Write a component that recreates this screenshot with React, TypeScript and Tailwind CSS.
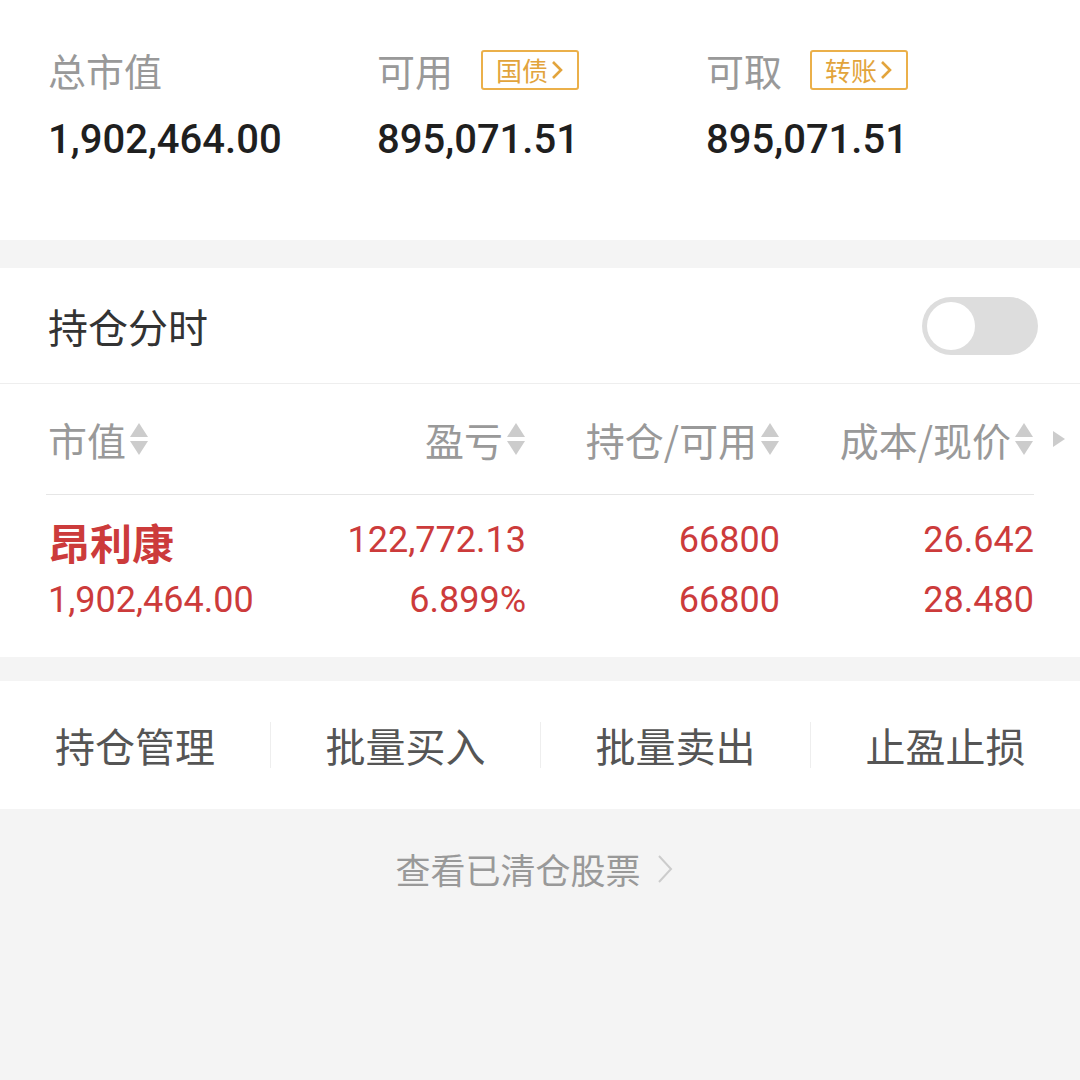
const cjk = "font-['Noto_Sans_CJK_SC','Noto_Sans',sans-serif]"
const num = "font-['Roboto','Noto_Sans_CJK_SC',sans-serif]"

function SortArrows() {
    return (
        <svg width="20" height="34" viewBox="0 0 20 34" className="ml-[3px] shrink-0">
            <path d="M10 1 L19 15 L1 15 Z" fill="#cccccc" />
            <path d="M1 19 L19 19 L10 33 Z" fill="#cccccc" />
        </svg>
    )
}

function Badge({ text }: { text: string }) {
    return (
        <div className="ml-[28px] flex h-[40px] w-[98px] items-center justify-center gap-[2px] rounded-[3px] border-2 border-[#ebb04a]">
            <span className={`${cjk} text-[26px] leading-none text-[#e2a43c]`}>{text}</span>
            <svg width="14" height="22" viewBox="0 0 14 22">
                <path d="M3 3 L11 11 L3 19" fill="none" stroke="#e2a43c" strokeWidth="2.6" strokeLinejoin="miter" />
            </svg>
        </div>
    )
}

const summary = [
    { label: "总市值", value: "1,902,464.00" },
    { label: "可用", value: "895,071.51", badge: "国债" },
    { label: "可取", value: "895,071.51", badge: "转账" },
]

const headers = ["市值", "盈亏", "持仓/可用", "成本/现价"]
const actions = ["持仓管理", "批量买入", "批量卖出", "止盈止损"]

export default function App() {
    return (
        <div className="flex min-h-[1080px] w-[1080px] flex-col bg-[#f4f4f4]">
            {/* account summary */}
            <section className="grid h-[240px] grid-cols-[329px_329px_1fr] bg-white pl-[48px] pt-[50px]">
                {summary.map(item => (
                    <div key={item.label} className="flex flex-col">
                        <div className="flex h-[40px] items-center">
                            <span className={`${cjk} text-[38px] leading-none text-[#999999]`}>{item.label}</span>
                            {item.badge && <Badge text={item.badge} />}
                        </div>
                        <div className={`${num} mt-[26px] h-[48px] text-[40px] font-medium leading-[48px] text-[#1f1f1f]`}>{item.value}</div>
                    </div>
                ))}
            </section>

            <div className="h-[28px]" />

            {/* positions */}
            <section className="bg-white">
                <div className="flex h-[116px] items-center justify-between border-b border-[#eeeeee] pl-[48px] pr-[42px]">
                    <span className={`${cjk} text-[40px] text-[#333333]`}>持仓分时</span>
                    <div className="flex h-[58px] w-[116px] items-center rounded-full bg-[#dddddd] pl-[5px]">
                        <div className="size-[48px] rounded-full bg-white" />
                    </div>
                </div>

                <div className="flex h-[110px] items-center pl-[48px] pr-[14px]">
                    <div className="grid flex-1 grid-cols-[224px_254px_254px_254px]">
                        {headers.map((h, i) => (
                            <div key={h} className={`flex items-center ${i === 0 ? "justify-start" : "justify-end"}`}>
                                <span className={`${cjk} text-[39px] leading-none text-[#999999]`}>{h}</span>
                                <SortArrows />
                            </div>
                        ))}
                    </div>
                    <svg width="14" height="16" viewBox="0 0 14 16" className="ml-[16px]">
                        <path d="M1 0 L13 8 L1 16 Z" fill="#cccccc" />
                    </svg>
                </div>
                <div className="mx-[46px] h-px bg-[#e6e6e6]" />

                <div className="h-[162px] pl-[48px] pr-[46px] pt-[22px] text-[#cc3b3b]">
                    <div className="grid grid-cols-[224px_254px_254px_254px]">
                        <div className={`${cjk} h-[50px] text-[42px] font-semibold leading-[50px]`}>昂利康</div>
                        <div className={`${num} text-right text-[36px] leading-[46px]`}>122,772.13</div>
                        <div className={`${num} text-right text-[36px] leading-[46px]`}>66800</div>
                        <div className={`${num} text-right text-[36px] leading-[46px]`}>26.642</div>
                    </div>
                    <div className="mt-[10px] grid grid-cols-[224px_254px_254px_254px]">
                        <div className={`${num} whitespace-nowrap text-[36px] leading-[46px]`}>1,902,464.00</div>
                        <div className={`${num} text-right text-[36px] leading-[46px]`}>6.899%</div>
                        <div className={`${num} text-right text-[36px] leading-[46px]`}>66800</div>
                        <div className={`${num} text-right text-[36px] leading-[46px]`}>28.480</div>
                    </div>
                </div>
            </section>

            <div className="h-[24px]" />

            {/* actions */}
            <section className="grid h-[128px] grid-cols-4 items-center bg-white">
                {actions.map((a, i) => (
                    <div key={a} className={`flex h-[46px] items-center justify-center ${i > 0 ? "border-l border-[#eeeeee]" : ""}`}>
                        <span className={`${cjk} text-[40px] leading-none text-[#555555]`}>{a}</span>
                    </div>
                ))}
            </section>

            <div className="flex items-center justify-center pr-[12px] pt-[40px]">
                <span className={`${cjk} text-[35px] leading-[40px] text-[#999999]`}>查看已清仓股票</span>
                <svg width="16" height="30" viewBox="0 0 16 30" className="ml-[16px]">
                    <path d="M2 2 L14 15 L2 28" fill="none" stroke="#cccccc" strokeWidth="2" />
                </svg>
            </div>
        </div>
    )
}
